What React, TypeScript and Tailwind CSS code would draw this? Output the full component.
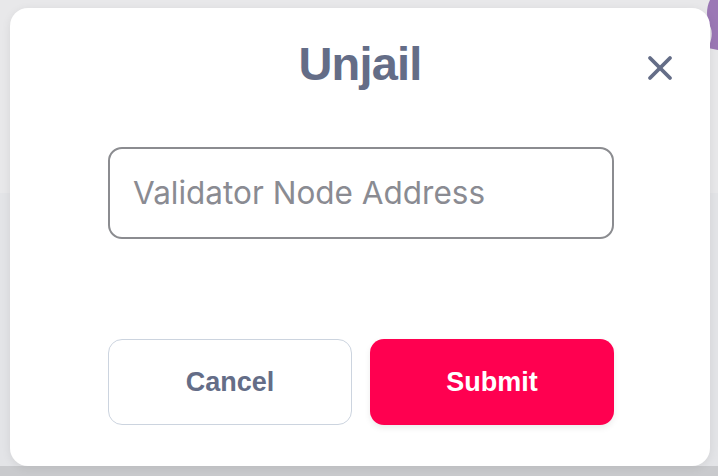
import { X } from "lucide-react";

export default function App() {
  return (
    <div className="relative w-[718px] h-[476px] overflow-hidden bg-[#e8e8ea] font-['Liberation_Sans',sans-serif]">
      {/* BACKDROP */}
      <div className="absolute left-0 right-0 top-[193px] h-[273px] bg-[#e3e4e7]"></div>
      <div className="absolute left-0 right-0 bottom-0 h-[10px] bg-[#c9cacd]"></div>
      <svg
        className="absolute right-0 top-0"
        width="14"
        height="50"
        viewBox="0 0 14 50"
      >
        <path
          d="M14 0 L6 0 C2 8 2 18 6 26 C9 32 8 40 4 48 L14 50 Z"
          fill="#9b78b5"
        />
      </svg>

      {/* MODAL */}
      <div className="relative pt-[8px] pl-[10px]">
        <div className="w-[700px] h-[458px] bg-white rounded-[18px] shadow-[0_2px_10px_rgba(0,0,0,0.08)] flex flex-col">
          {/* HEADER */}
          <div className="relative h-[120px] flex justify-center">
            <h2 className="mt-[30px] h-[52px] leading-[52px] text-[47px] font-bold tracking-[-0.8px] text-[#646d87]">
              Unjail
            </h2>
            <button className="absolute right-[30px] top-[40px] text-[#646d87]">
              <X size={40} strokeWidth={2.3} />
            </button>
          </div>

          {/* INPUT */}
          <div className="flex justify-center pt-[19px] pl-[2px]">
            <div className="w-[506px] h-[92px] rounded-[14px] border-2 border-[#8b8c90] flex items-center px-[23px]">
              <span className="font-['Inter',sans-serif] text-[31.5px] text-[#8a8b92]">
                Validator Node Address
              </span>
            </div>
          </div>

          {/* ACTIONS */}
          <div className="flex justify-center gap-[18px] mt-[100px] pl-[2px]">
            <button className="w-[244px] h-[86px] rounded-[14px] border-[1.5px] border-[#ccd4df] bg-white text-[27px] font-bold text-[#646d87]">
              Cancel
            </button>
            <button className="w-[244px] h-[86px] rounded-[14px] bg-[#ff0050] shadow-[0_3px_6px_rgba(0,0,0,0.08)] text-[27px] font-bold text-white">
              Submit
            </button>
          </div>
        </div>
      </div>
    </div>
  );
}
